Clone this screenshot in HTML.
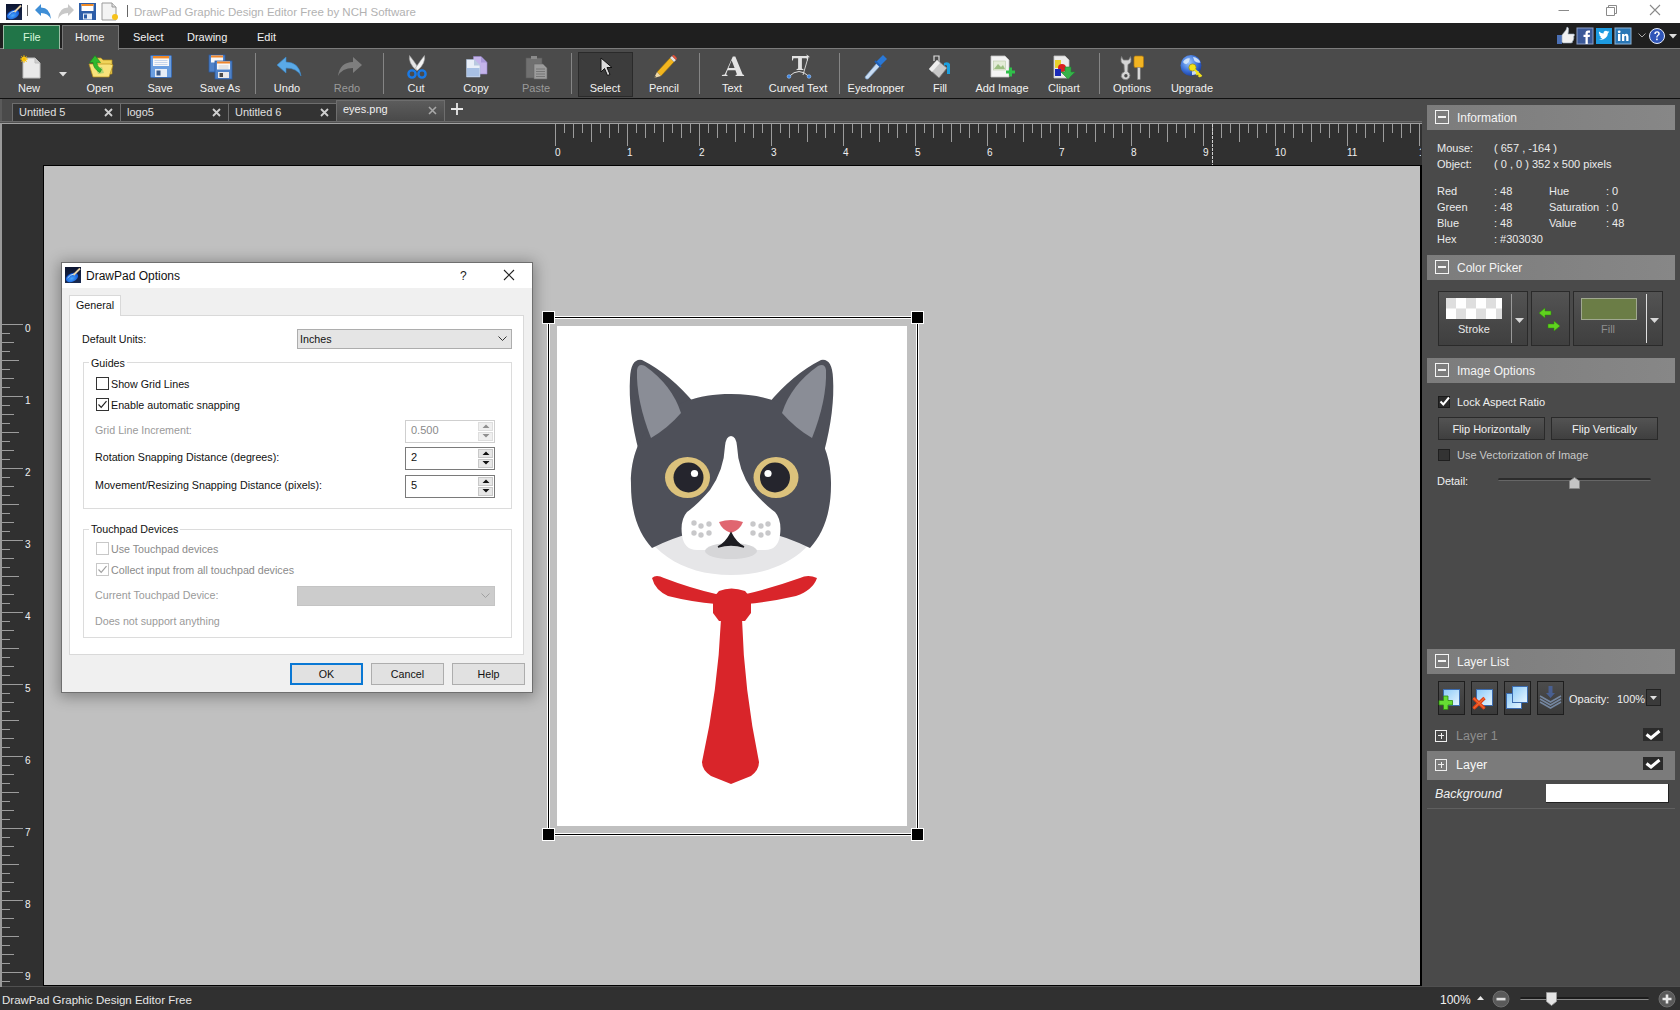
<!DOCTYPE html>
<html><head><meta charset="utf-8">
<style>
*{box-sizing:border-box;margin:0;padding:0}
html,body{width:1680px;height:1010px;overflow:hidden;background:#4a4a4a;font-family:"Liberation Sans",sans-serif;font-size:11px;position:relative}
.a{position:absolute}
.t{position:absolute;white-space:nowrap;line-height:1}
svg{position:absolute;overflow:visible}
#title{left:0;top:0;width:1680px;height:23px;background:#fff}
#menubar{left:0;top:23px;width:1680px;height:26px;background:#1f1f1f}
#menuline{left:0;top:48px;width:1680px;height:1px;background:#7c7c7c}
#toolbar{left:0;top:49px;width:1680px;height:49px;background:#4b4b4b}
#tbline{left:0;top:98px;width:1680px;height:1px;background:#101010}
#tabstrip{left:0;top:99px;width:1422px;height:24px;background:#4a4a4a}
#rulerarea{left:0;top:123px;width:1422px;height:863px;background:#303030}
#canvas{left:43px;top:165px;width:1379px;height:821px;background:#c0c0c0;border:1px solid #000;border-right:2px solid #000;overflow:hidden}
#panel{left:1422px;top:99px;width:258px;height:887px;background:#4a4a4a}
#status{left:0;top:986px;width:1680px;height:24px;background:#303030;border-top:1px solid #505050}
.lbl{position:absolute;top:83px;color:#f2f2f2;font-size:11px;white-space:nowrap;line-height:11px;text-align:center;width:100px;margin-left:-50px}
.lbl.dis{color:#9a9a9a}
.sep{position:absolute;top:53px;width:1px;height:41px;background:#858585}
.mi{position:absolute;top:32px;color:#f2f2f2;font-size:11px;line-height:11px;white-space:nowrap}
</style></head><body>
<div class="a" id="title"></div>
<div class="a" id="menubar"></div>
<div class="a" id="menuline"></div>
<div class="a" id="toolbar"></div>
<div class="a" id="tbline"></div>
<div class="a" id="tabstrip"></div>
<div class="a" id="rulerarea"></div>
<div class="a" id="canvas"></div>
<div class="a" id="panel"></div>
<div class="a" id="status"></div>
<!-- title bar -->
<svg style="left:6px;top:4px" width="16" height="16" viewBox="0 0 16 16">
<defs><linearGradient id="gbg1" x1="0" y1="0" x2="0" y2="1"><stop offset="0" stop-color="#0b1430"/><stop offset="1" stop-color="#1a2a50"/></linearGradient>
<radialGradient id="gbl1" cx="0.45" cy="0.6" r="0.6"><stop offset="0" stop-color="#4aa8ff"/><stop offset="1" stop-color="#0a4ed0"/></radialGradient></defs>
<rect x="0" y="0" width="16" height="16" fill="url(#gbg1)"/>
<ellipse cx="7" cy="10.5" rx="6.5" ry="4.2" transform="rotate(-25 7 10.5)" fill="url(#gbl1)"/>
<path d="M2.5 11 Q5 7.5 9 7" stroke="#bfe4ff" stroke-width="1" fill="none"/>
<path d="M8.5 8 L15 1.5" stroke="#e6d2a8" stroke-width="1.8"/>
</svg>
<div class="a" style="left:27px;top:5px;width:1px;height:11px;background:#666"></div>
<svg style="left:35px;top:4px" width="17" height="16" viewBox="0 0 17 16">
<path d="M0 6 L6 0 L6 3.5 Q15 3.5 16 15 Q13 9 6 9 L6 12 Z" fill="#3e8ed6"/>
</svg>
<svg style="left:57px;top:4px" width="17" height="16" viewBox="0 0 17 16">
<path d="M17 6 L11 0 L11 3.5 Q2 3.5 1 15 Q4 9 11 9 L11 12 Z" fill="#c8c8c8"/>
</svg>
<svg style="left:79px;top:3px" width="17" height="17" viewBox="0 0 17 17">
<rect x="0" y="0" width="17" height="17" fill="#2d5ea8"/>
<rect x="2.5" y="1" width="12" height="7" fill="#fff"/>
<rect x="2.5" y="1" width="12" height="2" fill="#f08a24"/>
<rect x="4" y="10.5" width="9" height="6" fill="#e6eef8"/>
<rect x="5" y="11.5" width="3" height="4" fill="#2d5ea8"/>
</svg>
<svg style="left:101px;top:3px" width="17" height="17" viewBox="0 0 17 17">
<path d="M1 0 L11 0 L15 4 L15 17 L1 17 Z" fill="#f4f4f4" stroke="#9a9a9a" stroke-width="1"/>
<path d="M11 0 L11 4 L15 4" fill="#ddd" stroke="#9a9a9a"/>
<circle cx="14" cy="14" r="3" fill="#f7c21b"/>
</svg>
<div class="a" style="left:127px;top:5px;width:1px;height:12px;background:#666"></div>
<div class="t" style="left:134px;top:7px;font-size:11.5px;color:#b2b2b2">DrawPad Graphic Design Editor Free by NCH Software</div>
<svg style="left:1558px;top:5px" width="104" height="12" viewBox="0 0 104 12">
<path d="M0.5 5.5 H11" stroke="#8a8a8a" stroke-width="1"/>
<path d="M48.5 2.5 H56.5 V10.5 H48.5 Z M50.5 2.5 V0.5 H58.5 V8.5 H56.5" stroke="#8a8a8a" fill="none" stroke-width="1"/>
<path d="M92 0 L102 10 M102 0 L92 10" stroke="#8a8a8a" stroke-width="1.1"/>
</svg>
<!-- menu bar -->
<div class="a" style="left:3px;top:25px;width:57px;height:24px;background:#217548;border:1px solid #9cbfa6;border-bottom:none"></div>
<div class="t" style="left:23px;top:32px;font-size:11px;color:#d8f5dc">File</div>
<div class="a" style="left:62px;top:25px;width:57px;height:25px;background:#4b4b4b;border:1px solid #777;border-bottom:none"></div>
<div class="mi" style="left:75px">Home</div>
<div class="mi" style="left:133px">Select</div>
<div class="mi" style="left:187px">Drawing</div>
<div class="mi" style="left:257px">Edit</div>
<!-- social icons -->
<svg style="left:1557px;top:27px" width="18" height="17" viewBox="0 0 18 17">
<rect x="0" y="8" width="5" height="9" fill="#4a6fb5"/>
<path d="M5 8 L9 3 L10 0 Q12 0 11.5 4 L11 7 L17 7 Q18 8 17 9 L16.5 10 Q17.5 11 16.5 12 Q17 13.5 15.5 14 Q16 16 14 16 L6 16 L5 15 Z" fill="#f0f0f0" stroke="#9ab" stroke-width="0.6"/>
</svg>
<svg style="left:1577px;top:28px" width="16" height="16" viewBox="0 0 16 16">
<rect x="0" y="0" width="16" height="16" fill="#3b5998"/>
<rect x="0" y="0" width="16" height="16" fill="none" stroke="#8ea0c8" stroke-width="1"/>
<path d="M8.5 16 V9 H6.5 V6.8 H8.5 V5 Q8.5 2.5 11 2.5 H13 V4.7 H11.6 Q10.8 4.7 10.8 5.5 V6.8 H13 L12.7 9 H10.8 V16 Z" fill="#fff"/>
</svg>
<svg style="left:1596px;top:28px" width="16" height="16" viewBox="0 0 16 16">
<rect x="0" y="0" width="16" height="16" fill="#1d9ae0"/>
<path d="M3 11.5 Q7 12.5 9.5 10 Q12 7.5 12 5 L13.5 3.8 L12.2 4 L13 2.8 L11.5 3.4 Q10 2 8.3 3.3 Q7.3 4.3 7.6 5.6 Q5 5.5 3 3.5 Q2.3 5.5 4 6.8 L3.2 6.6 Q3.4 8.2 5 8.8 L4.2 8.9 Q4.8 10.2 6.4 10.4 Q5 11.5 3 11.5 Z" fill="#fff"/>
</svg>
<svg style="left:1615px;top:28px" width="16" height="16" viewBox="0 0 16 16">
<rect x="0" y="0" width="16" height="16" fill="#2a77b5"/>
<rect x="0" y="0" width="16" height="16" fill="none" stroke="#8db3d6" stroke-width="1"/>
<rect x="3" y="6" width="2.4" height="7" fill="#fff"/>
<circle cx="4.2" cy="3.8" r="1.4" fill="#fff"/>
<path d="M7 6 H9.2 V7 Q10 5.8 11.5 5.8 Q13.5 5.8 13.5 8.5 V13 H11.2 V9 Q11.2 7.8 10.2 7.8 Q9.3 7.8 9.3 9 V13 H7 Z" fill="#fff"/>
</svg>
<svg style="left:1638px;top:33px" width="8" height="5" viewBox="0 0 8 5"><path d="M0.5 0.5 L4 4 L7.5 0.5" stroke="#aaa" fill="none" stroke-width="1"/></svg>
<svg style="left:1649px;top:28px" width="16" height="16" viewBox="0 0 16 16">
<circle cx="8" cy="8" r="7.5" fill="#2f55b8" stroke="#e8eefc" stroke-width="1"/>
<path d="M5.3 6 Q5.3 3.2 8.1 3.2 Q10.8 3.2 10.8 5.7 Q10.8 7.2 9 8.1 Q8.5 8.4 8.5 9.6 H7.2 Q7.2 7.8 8.2 7.2 Q9.3 6.5 9.3 5.7 Q9.3 4.6 8.1 4.6 Q6.8 4.6 6.8 6 Z" fill="#fff"/>
<rect x="7.1" y="10.6" width="1.6" height="1.6" fill="#fff"/>
</svg>
<svg style="left:1669px;top:34px" width="8" height="5" viewBox="0 0 8 5"><path d="M0 0 L8 0 L4 4.5 Z" fill="#ddd"/></svg>
<!-- toolbar -->
<!-- New -->
<svg style="left:20px;top:55px" width="22" height="24" viewBox="0 0 22 24">
<path d="M3 3 H15 L20 8 V23 H3 Z" fill="#e9e9e9" stroke="#bdbdbd" stroke-width="1"/>
<path d="M15 3 V8 H20" fill="#cfcfcf" stroke="#bdbdbd" stroke-width="1"/>
<circle cx="4" cy="4" r="2.6" fill="#ffd21f"/>
<path d="M4 0 V8 M0 4 H8 M1.2 1.2 L6.8 6.8 M6.8 1.2 L1.2 6.8" stroke="#f5b800" stroke-width="0.8"/>
</svg>
<svg style="left:59px;top:72px" width="9" height="5" viewBox="0 0 9 5"><path d="M0 0 H8 L4 4.5 Z" fill="#e0e0e0"/></svg>
<div class="lbl" style="left:29px">New</div>
<!-- Open -->
<svg style="left:88px;top:55px" width="26" height="24" viewBox="0 0 26 24">
<path d="M6 3 H13 L15 5 H24 V19 H6 Z" fill="#f0d45a" stroke="#b8901a" stroke-width="0.7"/>
<path d="M1 9 H22 L25 10 L21 22 H5 Z" fill="#f8e27a" stroke="#b8901a" stroke-width="0.7"/>
<path d="M8 13 L14 12 L16 18 L10 19 Z" fill="#a8d070" opacity="0.85"/>
<path d="M7 0.5 L1.5 7.5 H5 Q5.5 14 12 17.5 L13.5 14.5 Q9 12 8.8 7.5 H12.5 Z" fill="#2eb82e" stroke="#168a16" stroke-width="0.6"/>
</svg>
<div class="lbl" style="left:100px">Open</div>
<!-- Save -->
<svg style="left:150px;top:55px" width="22" height="23" viewBox="0 0 22 23">
<rect x="0.5" y="0.5" width="21" height="22" rx="1" fill="#6a9ee0" stroke="#3a6ab0" stroke-width="1"/>
<rect x="3" y="1" width="16" height="10" fill="#f8f8f8"/>
<rect x="3" y="1" width="16" height="2.4" fill="#f08a2a"/>
<path d="M4.5 5.5 H17.5 M4.5 7.5 H17.5 M4.5 9.5 H17.5" stroke="#b8cce8" stroke-width="0.8"/>
<rect x="5" y="14" width="12" height="8" fill="#e8eef6"/>
<rect x="6.5" y="15.5" width="4" height="5" fill="#3a5a8a"/>
</svg>
<div class="lbl" style="left:160px">Save</div>
<!-- Save As -->
<svg style="left:208px;top:54px" width="26" height="26" viewBox="0 0 26 26">
<rect x="1" y="1" width="16" height="17" fill="#4f82c8" stroke="#2b5aa0" stroke-width="0.8"/>
<rect x="3" y="1.5" width="12" height="7" fill="#f8f8f8"/>
<rect x="3" y="1.5" width="12" height="2" fill="#f0862a"/>
<rect x="7" y="7" width="17" height="18" fill="#4f82c8" stroke="#2b5aa0" stroke-width="0.8"/>
<rect x="9" y="7.5" width="13" height="8" fill="#f8f8f8"/>
<rect x="9" y="7.5" width="13" height="2" fill="#f0862a"/>
<path d="M10.5 12 H20.5 M10.5 14 H20.5" stroke="#c8c8c8" stroke-width="0.8"/>
<rect x="10" y="18" width="11" height="6" fill="#eaeaea"/>
<rect x="11.5" y="19" width="3.5" height="4" fill="#4a4a4a"/>
</svg>
<div class="lbl" style="left:220px">Save As</div>
<div class="sep" style="left:255px"></div>
<!-- Undo -->
<svg style="left:277px;top:57px" width="25" height="20" viewBox="0 0 25 20">
<path d="M0 8 L9 0 L9 5 Q22 5 24 19 Q20 11 9 11 L9 16 Z" fill="#5aa9e6" stroke="#3a86c8" stroke-width="0.6"/>
</svg>
<div class="lbl" style="left:287px">Undo</div>
<!-- Redo -->
<svg style="left:337px;top:57px" width="25" height="20" viewBox="0 0 25 20">
<path d="M25 8 L16 0 L16 5 Q3 5 1 19 Q5 11 16 11 L16 16 Z" fill="#7e7e7e"/>
</svg>
<div class="lbl dis" style="left:347px">Redo</div>
<div class="sep" style="left:383px"></div>
<!-- Cut -->
<svg style="left:405px;top:55px" width="24" height="25" viewBox="0 0 24 25">
<path d="M4.5 0.5 Q3 8 11.5 15.5 L13.5 13 Q9 6 4.5 0.5 Z" fill="#e6e6e6" stroke="#a0a0a0" stroke-width="0.6"/>
<path d="M19.5 0.5 Q21 8 12.5 15.5 L10.5 13 Q15 6 19.5 0.5 Z" fill="#f4f4f4" stroke="#a0a0a0" stroke-width="0.6"/>
<circle cx="7" cy="19" r="3.6" fill="none" stroke="#1a7ae6" stroke-width="2.4"/>
<circle cx="17" cy="19" r="3.6" fill="none" stroke="#1a7ae6" stroke-width="2.4"/>
</svg>
<div class="lbl" style="left:416px">Cut</div>
<!-- Copy -->
<svg style="left:465px;top:56px" width="24" height="24" viewBox="0 0 24 24">
<path d="M8.5 0.5 H16 L22 6.5 V18 H8.5 Z" fill="#c4b4ea" stroke="#9a88cc" stroke-width="0.6"/>
<path d="M16 0.5 V6.5 H22" fill="#a898d8"/>
<path d="M1.5 3.5 H9 L15 9.5 V21 H1.5 Z" fill="#e8eef8" stroke="#a8bcd8" stroke-width="0.6"/>
<path d="M9 3.5 V9.5 H15" fill="#b8c8e0"/>
<rect x="2" y="12" width="12.5" height="8.5" fill="#a8c0e4"/>
</svg>
<div class="lbl" style="left:476px">Copy</div>
<!-- Paste -->
<svg style="left:525px;top:56px" width="24" height="24" viewBox="0 0 24 24">
<rect x="1" y="2" width="16" height="20" fill="#707070" stroke="#5a5a5a" stroke-width="0.6"/>
<rect x="6" y="0" width="6" height="3" fill="#8a8a8a"/>
<path d="M9 8 H18 L22 12 V23 H9 Z" fill="#9c9c9c" stroke="#6a6a6a" stroke-width="0.6"/>
<path d="M11 13 H20 M11 15.5 H20 M11 18 H20 M11 20.5 H20" stroke="#6c6c6c" stroke-width="0.8"/>
</svg>
<div class="lbl dis" style="left:536px">Paste</div>
<div class="sep" style="left:571px"></div>
<!-- Select (active) -->
<div class="a" style="left:578px;top:52px;width:55px;height:45px;background:#3c3c3c;border:1px solid #2a2a2a"></div>
<svg style="left:600px;top:57px" width="13" height="20" viewBox="0 0 13 20">
<path d="M1 1 L1 15 L4.5 11.5 L7.5 18.5 L10 17.5 L7 10.5 L12 10.5 Z" fill="#dcdcdc" stroke="#111" stroke-width="1"/>
</svg>
<div class="lbl" style="left:605px">Select</div>
<!-- Pencil -->
<svg style="left:653px;top:55px" width="24" height="24" viewBox="0 0 24 24">
<path d="M4 17 L17 3 L21 7 L8 21 Z" fill="#f2b51e" stroke="#8a6a10" stroke-width="0.6"/>
<path d="M17 3 L19 1 L23 5 L21 7 Z" fill="#e4e4e4"/>
<path d="M19.3 0.7 Q20.5 -0.5 21.8 0.8 L23.2 2.2 Q24.5 3.5 23.3 4.7 L23 5 L19 1 Z" fill="#e0523a"/>
<path d="M4 17 L8 21 L1 23 Z" fill="#f0d9a8"/>
<path d="M2 21 L3 22 L1 23 Z" fill="#222"/>
</svg>
<div class="lbl" style="left:664px">Pencil</div>
<div class="sep" style="left:699px"></div>
<!-- Text -->
<svg style="left:721px;top:56px" width="24" height="21" viewBox="0 0 26 22" preserveAspectRatio="none"><path d="M1 21 H7 V20 L5.5 19.5 L7.2 15 H15.6 L17.3 19.5 L15.8 20 V21 H25 V20 L23.5 19.5 L15.5 0.5 H12.8 L4 19.5 L1 20 Z M8.2 12.6 L11.5 4.5 L14.7 12.6 Z" fill="#e4e4e4" fill-rule="evenodd"/></svg>
<div class="lbl" style="left:732px">Text</div>
<!-- Curved text -->
<svg style="left:786px;top:54px" width="26" height="26" viewBox="0 0 26 26">
<path d="M6 2 H22 V6.5 H21.2 L20.5 4.2 H15.9 V14.5 L17.6 15.4 V16 H10.4 V15.4 L12.1 14.5 V4.2 H7.5 L6.8 6.5 H6 Z" fill="#e2e2e2"/>
<path d="M3 22.5 Q13 12.5 23 22.5" stroke="#e0e0e0" fill="none" stroke-width="1"/>
<path d="M22.5 2 L17 21" stroke="#e0e0e0" stroke-width="0.9"/>
<path d="M20.5 1 L23.5 3" stroke="#e0e0e0" stroke-width="0.9"/>
<circle cx="3" cy="22.5" r="1.8" fill="#3a86e6" stroke="#a8ccff" stroke-width="0.6"/>
<circle cx="23" cy="22.5" r="1.8" fill="#3a86e6" stroke="#a8ccff" stroke-width="0.6"/>
</svg>
<div class="lbl" style="left:798px">Curved Text</div>
<div class="sep" style="left:839px"></div>
<!-- Eyedropper -->
<svg style="left:864px;top:54px" width="24" height="26" viewBox="0 0 24 26">
<path d="M2 25 L1 23 L13 9 L16 12 L4 25 Z" fill="#c9dcf2" stroke="#7aa0cc" stroke-width="0.7"/>
<path d="M12 8 L19 1 L23 5 L16 12 Z" fill="#2a78d6"/>
<path d="M11 7 L17 13" stroke="#1d5fb8" stroke-width="2"/>
</svg>
<div class="lbl" style="left:876px">Eyedropper</div>
<!-- Fill -->
<svg style="left:927px;top:54px" width="26" height="26" viewBox="0 0 26 26">
<path d="M7 7 V2 H12 V8" stroke="#ddd" fill="none" stroke-width="1.2"/>
<path d="M2 15 L10 6 L20 14 L12 24 Z" fill="#c8c8c8" stroke="#7a7a7a" stroke-width="0.8"/>
<path d="M2 15 L10 6 L13 9 L5 18 Z" fill="#eeeeee"/>
<path d="M17 9 Q21 7 23 10 V20 H20 V12 Q19 10 17 12 Z" fill="#1aa0e0"/>
</svg>
<div class="lbl" style="left:940px">Fill</div>
<!-- Add Image -->
<svg style="left:990px;top:55px" width="26" height="26" viewBox="0 0 26 26">
<path d="M1 1 H15 L19 5 V22 H1 Z" fill="#f4f4f4" stroke="#c4c4c4" stroke-width="0.8"/>
<rect x="3.5" y="6" width="12" height="9" fill="#e4ecd8" stroke="#b8c8a8" stroke-width="0.6"/>
<path d="M4 14 L8 9 L11 12 L13 10 L15 14 Z" fill="#9cbf82"/>
<path d="M16 17 H25 M20.5 12.5 V21.5" stroke="#2fbf4a" stroke-width="3"/>
</svg>
<div class="lbl" style="left:1002px">Add Image</div>
<!-- Clipart -->
<svg style="left:1052px;top:55px" width="26" height="26" viewBox="0 0 26 26">
<path d="M2 1 H13 L17 5 V23 H2 Z" fill="#ececec" stroke="#c4c4c4" stroke-width="0.8"/>
<path d="M3 5 L9 5 L9 13 L3 13 Z" fill="#e8d22a"/>
<circle cx="10" cy="13" r="4" fill="#d82020"/>
<rect x="3" y="14" width="6" height="7" fill="#1a2ab8"/>
<path d="M13 12 H19 V17 H23 L16 24 L9 17 H13 Z" fill="#36b24a" stroke="#1e8a30" stroke-width="0.6"/>
</svg>
<div class="lbl" style="left:1064px">Clipart</div>
<div class="sep" style="left:1099px"></div>
<!-- Options -->
<svg style="left:1120px;top:55px" width="26" height="26" viewBox="0 0 26 26">
<path d="M1.5 1.5 Q-0.5 8 4 9.5 L4.3 16.8 Q0.8 18.2 1.2 21.5 Q2.5 25 6.2 24.8 Q10 24 10 20.5 Q9.8 17.8 7.8 16.8 L8 9.5 Q12.5 8 10.5 1.5 L8.6 5 H3.4 Z" fill="#d4d4d4" stroke="#7a7a7a" stroke-width="0.8"/>
<circle cx="5.9" cy="20.8" r="1.7" fill="#4b4b4b"/>
<rect x="14" y="1" width="9.5" height="11.5" rx="1.5" fill="#f2b422" stroke="#b07a10" stroke-width="0.7"/>
<rect x="17.6" y="12.5" width="2.6" height="12" fill="#d8d8d8" stroke="#888" stroke-width="0.5"/>
</svg>
<div class="lbl" style="left:1132px">Options</div>
<!-- Upgrade -->
<svg style="left:1180px;top:55px" width="24" height="24" viewBox="0 0 24 24">
<defs><radialGradient id="glb" cx="0.4" cy="0.35" r="0.7"><stop offset="0" stop-color="#9cc8ff"/><stop offset="0.6" stop-color="#3a70d8"/><stop offset="1" stop-color="#1a3a9a"/></radialGradient></defs>
<circle cx="11" cy="10.5" r="10.5" fill="url(#glb)"/>
<path d="M3 7 Q6 2.5 10 3.5 Q9.5 7 6.5 9 Q4.5 9.5 3 7 Z M13 2 Q18.5 2.5 20.5 7.5 Q17 8.5 14.5 6 Z M12 16 Q16 15 19 16.5 Q16 20 12 20 Z" fill="#d8e8fa" opacity="0.9"/>
<circle cx="12.5" cy="12.5" r="3.6" fill="#f2e21a" stroke="#9a8a10" stroke-width="0.7"/>
<path d="M14.8 14.8 L21.5 21.5 M18 18 L16.2 19.8 M20.2 20.2 L18.6 21.8" stroke="#f2e21a" stroke-width="2.2"/>
</svg>
<div class="lbl" style="left:1192px">Upgrade</div>
<!-- doc tabs -->
<div class="a" style="left:0;top:99px;width:2px;height:24px;background:#5a5a5a"></div>
<div class="a" style="left:12px;top:103px;width:109px;height:19px;background:#333;border:1px solid #6e6e6e;border-bottom:none"></div>
<div class="a" style="left:120px;top:103px;width:109px;height:19px;background:#333;border:1px solid #6e6e6e;border-bottom:none"></div>
<div class="a" style="left:228px;top:103px;width:109px;height:19px;background:#333;border:1px solid #6e6e6e;border-bottom:none"></div>
<div class="a" style="left:336px;top:100px;width:109px;height:22px;background:linear-gradient(#5c5c5c,#484848);border:1px solid #6e6e6e;border-bottom:none"></div>
<div class="t" style="left:19px;top:107px;color:#e0e0e0;font-size:11px">Untitled 5</div>
<div class="t" style="left:127px;top:107px;color:#e0e0e0;font-size:11px">logo5</div>
<div class="t" style="left:235px;top:107px;color:#e0e0e0;font-size:11px">Untitled 6</div>
<div class="t" style="left:343px;top:104px;color:#f0f0f0;font-size:11px">eyes.png</div>
<svg style="left:104px;top:108px" width="9" height="9" viewBox="0 0 9 9"><path d="M1 1 L8 8 M8 1 L1 8" stroke="#cfcfcf" stroke-width="1.8"/></svg>
<svg style="left:212px;top:108px" width="9" height="9" viewBox="0 0 9 9"><path d="M1 1 L8 8 M8 1 L1 8" stroke="#cfcfcf" stroke-width="1.8"/></svg>
<svg style="left:320px;top:108px" width="9" height="9" viewBox="0 0 9 9"><path d="M1 1 L8 8 M8 1 L1 8" stroke="#cfcfcf" stroke-width="1.8"/></svg>
<svg style="left:428px;top:106px" width="9" height="9" viewBox="0 0 9 9"><path d="M1 1 L8 8 M8 1 L1 8" stroke="#a8a8a8" stroke-width="1.6"/></svg>
<svg style="left:451px;top:103px" width="12" height="12" viewBox="0 0 12 12"><path d="M6 0 V12 M0 6 H12" stroke="#e8e8e8" stroke-width="1.8"/></svg>
<div class="a" style="left:0;top:121px;width:1422px;height:1px;background:#6a6a6a"></div>
<div class="a" style="left:0;top:122px;width:1422px;height:1px;background:#505050"></div>
<div class="a" style="left:0;top:123px;width:1422px;height:1px;background:#a2a2a2"></div>
<!-- rulers -->
<div class="a" style="left:0px;top:123px;width:2px;height:864px;background:#9a9a9a"></div>
<div class="a" style="left:0;top:0;width:1421px;height:1010px;overflow:hidden"><svg style="left:0;top:0" width="1680" height="1010" viewBox="0 0 1680 1010"><path d="M555.5 124V146 M564.5 124V133 M573.5 124V138 M582.5 124V133 M591.5 124V142 M600.5 124V133 M609.5 124V138 M618.5 124V133 M627.5 124V146 M636.5 124V133 M645.5 124V138 M654.5 124V133 M663.5 124V142 M672.5 124V133 M681.5 124V138 M690.5 124V133 M699.5 124V146 M708.5 124V133 M717.5 124V138 M726.5 124V133 M735.5 124V142 M744.5 124V133 M753.5 124V138 M762.5 124V133 M771.5 124V146 M780.5 124V133 M789.5 124V138 M798.5 124V133 M807.5 124V142 M816.5 124V133 M825.5 124V138 M834.5 124V133 M843.5 124V146 M852.5 124V133 M861.5 124V138 M870.5 124V133 M879.5 124V142 M888.5 124V133 M897.5 124V138 M906.5 124V133 M915.5 124V146 M924.5 124V133 M933.5 124V138 M942.5 124V133 M951.5 124V142 M960.5 124V133 M969.5 124V138 M978.5 124V133 M987.5 124V146 M996.5 124V133 M1005.5 124V138 M1014.5 124V133 M1023.5 124V142 M1032.5 124V133 M1041.5 124V138 M1050.5 124V133 M1059.5 124V146 M1068.5 124V133 M1077.5 124V138 M1086.5 124V133 M1095.5 124V142 M1104.5 124V133 M1113.5 124V138 M1122.5 124V133 M1131.5 124V146 M1140.5 124V133 M1149.5 124V138 M1158.5 124V133 M1167.5 124V142 M1176.5 124V133 M1185.5 124V138 M1194.5 124V133 M1203.5 124V146 M1212.5 124V133 M1221.5 124V138 M1230.5 124V133 M1239.5 124V142 M1248.5 124V133 M1257.5 124V138 M1266.5 124V133 M1275.5 124V146 M1284.5 124V133 M1293.5 124V138 M1302.5 124V133 M1311.5 124V142 M1320.5 124V133 M1329.5 124V138 M1338.5 124V133 M1347.5 124V146 M1356.5 124V133 M1365.5 124V138 M1374.5 124V133 M1383.5 124V142 M1392.5 124V133 M1401.5 124V138 M1410.5 124V133 M1419.5 124V146" stroke="#9c9c9c" stroke-width="1" fill="none"/><path d="M2 324.5H23 M2 333.5H10 M2 342.5H14 M2 351.5H10 M2 360.5H19 M2 369.5H10 M2 378.5H14 M2 387.5H10 M2 396.5H23 M2 405.5H10 M2 414.5H14 M2 423.5H10 M2 432.5H19 M2 441.5H10 M2 450.5H14 M2 459.5H10 M2 468.5H23 M2 477.5H10 M2 486.5H14 M2 495.5H10 M2 504.5H19 M2 513.5H10 M2 522.5H14 M2 531.5H10 M2 540.5H23 M2 549.5H10 M2 558.5H14 M2 567.5H10 M2 576.5H19 M2 585.5H10 M2 594.5H14 M2 603.5H10 M2 612.5H23 M2 621.5H10 M2 630.5H14 M2 639.5H10 M2 648.5H19 M2 657.5H10 M2 666.5H14 M2 675.5H10 M2 684.5H23 M2 693.5H10 M2 702.5H14 M2 711.5H10 M2 720.5H19 M2 729.5H10 M2 738.5H14 M2 747.5H10 M2 756.5H23 M2 765.5H10 M2 774.5H14 M2 783.5H10 M2 792.5H19 M2 801.5H10 M2 810.5H14 M2 819.5H10 M2 828.5H23 M2 837.5H10 M2 846.5H14 M2 855.5H10 M2 864.5H19 M2 873.5H10 M2 882.5H14 M2 891.5H10 M2 900.5H23 M2 909.5H10 M2 918.5H14 M2 927.5H10 M2 936.5H19 M2 945.5H10 M2 954.5H14 M2 963.5H10 M2 972.5H23 M2 981.5H10" stroke="#9c9c9c" stroke-width="1" fill="none"/><path d="M1212.5 124V165" stroke="#cfcfcf" stroke-width="1" stroke-dasharray="3 1"/><g font-family="Liberation Sans" font-size="10" fill="#f0f0f0"><text x="555" y="156">0</text><text x="627" y="156">1</text><text x="699" y="156">2</text><text x="771" y="156">3</text><text x="843" y="156">4</text><text x="915" y="156">5</text><text x="987" y="156">6</text><text x="1059" y="156">7</text><text x="1131" y="156">8</text><text x="1203" y="156">9</text><text x="1275" y="156">10</text><text x="1347" y="156">11</text><text x="1419" y="156">12</text><text x="25" y="332">0</text><text x="25" y="404">1</text><text x="25" y="476">2</text><text x="25" y="548">3</text><text x="25" y="620">4</text><text x="25" y="692">5</text><text x="25" y="764">6</text><text x="25" y="836">7</text><text x="25" y="908">8</text><text x="25" y="980">9</text></g></svg></div>
<!-- canvas image -->
<div class="a" style="left:557px;top:326px;width:350px;height:500px;background:#fff"></div>
<svg style="left:0;top:0" width="1680" height="1010" viewBox="0 0 1680 1010">
<!-- chin -->
<path d="M731 394 C800 394 832 435 831 485 C830 540 790 575 731 575 C672 575 632 540 631 485 C630 435 662 394 731 394 Z" fill="#e6e6e8"/>
<!-- ears -->
<path d="M639 452 Q628 410 630 378 Q631 358 642 360 Q670 374 695 404 Z" fill="#4e5059"/>
<path d="M824 452 Q835 410 833 378 Q832 358 821 360 Q793 374 768 404 Z" fill="#4e5059"/>
<!-- head -->
<path d="M731 394 C800 394 832 435 831 485 C831 515 822 535 810 548 Q770 528 731 528 Q692 528 652 548 C640 535 631 515 631 485 C630 435 662 394 731 394 Z" fill="#4e5059"/>
<path d="M651 438 Q636 400 637 370 Q638 363 645 366 Q672 385 681 413 Q668 428 651 438 Z" fill="#8a8d96"/>
<path d="M812 438 Q827 400 826 370 Q825 363 818 366 Q791 385 782 413 Q795 428 812 438 Z" fill="#8a8d96"/>
<!-- blaze & muzzle -->
<path d="M731 436 Q736 436 737 446 Q738 470 752 490 Q765 505 775 512 Q782 520 780 535 Q778 550 765 550 L697 550 Q684 550 682 535 Q680 520 687 512 Q697 505 710 490 Q724 470 725 446 Q726 436 731 436 Z" fill="#fff"/>
<ellipse cx="731" cy="551" rx="26" ry="8" fill="#d6d6d8"/>
<!-- eyes -->
<ellipse cx="687.5" cy="477.5" rx="22.5" ry="20.5" fill="#dcc27c"/>
<circle cx="688.5" cy="477.5" r="15" fill="#25252d"/>
<circle cx="694.5" cy="473.5" r="3.6" fill="#fff"/>
<ellipse cx="776" cy="477.5" rx="22.5" ry="20.5" fill="#dcc27c"/>
<circle cx="775" cy="477.5" r="15" fill="#25252d"/>
<circle cx="768" cy="473.5" r="3.6" fill="#fff"/>
<!-- nose & mouth -->
<path d="M719 522 Q731 518 743 522 Q740 530 731 533 Q722 530 719 522 Z" fill="#e06670"/>
<path d="M731 533 Q726 543 718 547 Q731 543 744 547 Q736 543 731 533 Z" fill="#1d1d22" stroke="#1d1d22" stroke-width="1.5"/>
<g fill="#c8c8ca">
<circle cx="694" cy="523" r="2.7"/><circle cx="701" cy="526" r="2.7"/><circle cx="709" cy="524" r="2.7"/>
<circle cx="694" cy="533" r="2.7"/><circle cx="701" cy="535" r="2.7"/><circle cx="709" cy="533" r="2.7"/>
<circle cx="768" cy="524" r="2.7"/><circle cx="761" cy="526" r="2.7"/><circle cx="753" cy="524" r="2.7"/>
<circle cx="768" cy="533" r="2.7"/><circle cx="761" cy="535" r="2.7"/><circle cx="753" cy="533" r="2.7"/>
</g>
<!-- tie -->
<path d="M652 578 Q656 574 664 578 Q690 588 716 594 L746 594 Q772 588 800 578 Q808 574 817 578 Q813 590 796 596 Q770 602 746 604 L716 604 Q692 602 668 596 Q655 590 652 578 Z" fill="#d9252a"/>
<path d="M719 591 Q731 586 745 591 L751 598 V613 L745 621 H719 L713 613 V598 Z" fill="#d9252a"/>
<path d="M721 619 H742 Q744 690 759 762 Q759 770 751 776 L731 784 L711 776 Q702 770 702 762 Q718 690 721 619 Z" fill="#d9252a"/>
<!-- selection frame -->
<path d="M548.5 317.5 H917.5 V834.5 H548.5 Z" fill="none" stroke="#fff" stroke-width="3"/>
<path d="M548.5 317.5 H917.5 V834.5 H548.5 Z" fill="none" stroke="#000" stroke-width="1"/>
<g fill="#000" stroke="#fff" stroke-width="1">
<rect x="542.5" y="311.5" width="12" height="12"/>
<rect x="911.5" y="311.5" width="12" height="12"/>
<rect x="542.5" y="828.5" width="12" height="12"/>
<rect x="911.5" y="828.5" width="12" height="12"/>
</g>
</svg>
<!-- dialog --><div style="font-size:10.7px">
<div class="a" style="left:61px;top:262px;width:472px;height:431px;background:#f0f0f0;border:1px solid #6f6f6f;box-shadow:0 2px 14px 2px rgba(0,0,0,0.32)"></div>
<div class="a" style="left:62px;top:263px;width:470px;height:25px;background:#fff"></div>
<svg style="left:65px;top:267px" width="16" height="16" viewBox="0 0 16 16">
<defs><linearGradient id="gbg2" x1="0" y1="0" x2="0" y2="1"><stop offset="0" stop-color="#0b1430"/><stop offset="1" stop-color="#1a2a50"/></linearGradient>
<radialGradient id="gbl2" cx="0.45" cy="0.6" r="0.6"><stop offset="0" stop-color="#4aa8ff"/><stop offset="1" stop-color="#0a4ed0"/></radialGradient></defs>
<rect x="0" y="0" width="16" height="16" fill="url(#gbg2)"/>
<ellipse cx="7" cy="10.5" rx="6.5" ry="4.2" transform="rotate(-25 7 10.5)" fill="url(#gbl2)"/>
<path d="M2.5 11 Q5 7.5 9 7" stroke="#bfe4ff" stroke-width="1" fill="none"/>
<path d="M8.5 8 L15 1.5" stroke="#e6d2a8" stroke-width="1.8"/>
</svg>
<div class="t" style="left:86px;top:270px;font-size:12px;color:#111">DrawPad Options</div>
<div class="t" style="left:460px;top:270px;font-size:12px;color:#222">?</div>
<svg style="left:504px;top:270px" width="10" height="10" viewBox="0 0 10 10"><path d="M0 0 L10 10 M10 0 L0 10" stroke="#222" stroke-width="1.1"/></svg>
<!-- tab page -->
<div class="a" style="left:69px;top:315px;width:455px;height:340px;background:#fff;border:1px solid #d9d9d9"></div>
<div class="a" style="left:69px;top:295px;width:52px;height:21px;background:#fff;border:1px solid #d9d9d9;border-bottom:none"></div>
<div class="t" style="left:76px;top:300px;color:#111">General</div>
<div class="t" style="left:82px;top:334px;color:#111">Default Units:</div>
<div class="a" style="left:297px;top:329px;width:215px;height:20px;background:#e5e5e5;border:1px solid #adadad"></div>
<div class="t" style="left:300px;top:334px;color:#111">Inches</div>
<svg style="left:498px;top:336px" width="9" height="6" viewBox="0 0 9 6"><path d="M0.5 0.5 L4.5 4.5 L8.5 0.5" stroke="#333" fill="none" stroke-width="1"/></svg>
<!-- guides group -->
<div class="a" style="left:83px;top:362px;width:429px;height:147px;border:1px solid #dcdcdc"></div>
<div class="t" style="left:89px;top:358px;color:#111;background:#fff;padding:0 2px">Guides</div>
<div class="a" style="left:96px;top:377px;width:13px;height:13px;border:1px solid #333;background:#fff"></div>
<div class="t" style="left:111px;top:379px;color:#111">Show Grid Lines</div>
<div class="a" style="left:96px;top:398px;width:13px;height:13px;border:1px solid #333;background:#fff"></div>
<svg style="left:97px;top:399px" width="11" height="11" viewBox="0 0 11 11"><path d="M1.5 5.5 L4.2 8.3 L9.5 2.2" stroke="#222" fill="none" stroke-width="1.2"/></svg>
<div class="t" style="left:111px;top:400px;color:#111">Enable automatic snapping</div>
<div class="t" style="left:95px;top:425px;color:#9a9a9a">Grid Line Increment:</div>
<div class="a" style="left:405px;top:420px;width:90px;height:23px;border:1px solid #cfcfcf;background:#fff"></div>
<div class="a" style="left:478px;top:422px;width:15px;height:9px;border:1px solid #dedede;background:#efefef"></div>
<div class="a" style="left:478px;top:432px;width:15px;height:9px;border:1px solid #dedede;background:#efefef"></div>
<div class="t" style="left:411px;top:425px;color:#8a8a8a;font-size:11px">0.500</div>
<svg style="left:482px;top:424px" width="8" height="14" viewBox="0 0 8 14"><path d="M4 0.5 L7.5 4 H0.5 Z M0.5 10 H7.5 L4 13.5 Z" fill="#909090"/></svg>
<div class="t" style="left:95px;top:452px;color:#111">Rotation Snapping Distance (degrees):</div>
<div class="a" style="left:405px;top:447px;width:90px;height:23px;border:1px solid #7a7a7a;background:#fff"></div>
<div class="a" style="left:478px;top:449px;width:15px;height:9px;border:1px solid #c8c8c8;background:#e6e6e6"></div>
<div class="a" style="left:478px;top:459px;width:15px;height:9px;border:1px solid #c8c8c8;background:#e6e6e6"></div>
<div class="t" style="left:411px;top:452px;color:#111;font-size:11px">2</div>
<svg style="left:482px;top:451px" width="8" height="14" viewBox="0 0 8 14"><path d="M4 0.5 L7.5 4 H0.5 Z M0.5 10 H7.5 L4 13.5 Z" fill="#111"/></svg>
<div class="t" style="left:95px;top:480px;color:#111">Movement/Resizing Snapping Distance (pixels):</div>
<div class="a" style="left:405px;top:475px;width:90px;height:23px;border:1px solid #7a7a7a;background:#fff"></div>
<div class="a" style="left:478px;top:477px;width:15px;height:9px;border:1px solid #c8c8c8;background:#e6e6e6"></div>
<div class="a" style="left:478px;top:487px;width:15px;height:9px;border:1px solid #c8c8c8;background:#e6e6e6"></div>
<div class="t" style="left:411px;top:480px;color:#111;font-size:11px">5</div>
<svg style="left:482px;top:479px" width="8" height="14" viewBox="0 0 8 14"><path d="M4 0.5 L7.5 4 H0.5 Z M0.5 10 H7.5 L4 13.5 Z" fill="#111"/></svg>
<!-- touchpad group -->
<div class="a" style="left:83px;top:529px;width:429px;height:109px;border:1px solid #dcdcdc"></div>
<div class="t" style="left:89px;top:524px;color:#111;background:#fff;padding:0 2px">Touchpad Devices</div>
<div class="a" style="left:96px;top:542px;width:13px;height:13px;border:1px solid #c8c8c8;background:#fff"></div>
<div class="t" style="left:111px;top:544px;color:#8a8a8a">Use Touchpad devices</div>
<div class="a" style="left:96px;top:563px;width:13px;height:13px;border:1px solid #c8c8c8;background:#fff"></div>
<svg style="left:97px;top:564px" width="11" height="11" viewBox="0 0 11 11"><path d="M1.5 5.5 L4.2 8.3 L9.5 2.2" stroke="#a0a0a0" fill="none" stroke-width="1.2"/></svg>
<div class="t" style="left:111px;top:565px;color:#8a8a8a">Collect input from all touchpad devices</div>
<div class="t" style="left:95px;top:590px;color:#9a9a9a">Current Touchpad Device:</div>
<div class="a" style="left:297px;top:586px;width:198px;height:20px;background:#cccccc;border:1px solid #c4c4c4"></div>
<svg style="left:481px;top:593px" width="9" height="6" viewBox="0 0 9 6"><path d="M0.5 0.5 L4.5 4.5 L8.5 0.5" stroke="#a0a0a0" fill="none" stroke-width="1"/></svg>
<div class="t" style="left:95px;top:616px;color:#9a9a9a">Does not support anything</div>
<!-- buttons -->
<div class="a" style="left:290px;top:663px;width:73px;height:22px;background:#e1e1e1;border:2px solid #0a78d4"></div>
<div class="t" style="left:290px;top:669px;width:73px;text-align:center;color:#111">OK</div>
<div class="a" style="left:371px;top:663px;width:73px;height:22px;background:#e1e1e1;border:1px solid #adadad"></div>
<div class="t" style="left:371px;top:669px;width:73px;text-align:center;color:#111">Cancel</div>
<div class="a" style="left:452px;top:663px;width:73px;height:22px;background:#e1e1e1;border:1px solid #adadad"></div>
<div class="t" style="left:452px;top:669px;width:73px;text-align:center;color:#111">Help</div>
</div>
<!-- right panel -->
<style>
.ph{position:absolute;left:1427px;width:248px;height:25px;background:linear-gradient(90deg,#7c7c7c,#878787)}
.pm{position:absolute;left:1435px;width:14px;height:14px;border:1px solid #f4f4f4}
.pm:after{content:"";position:absolute;left:2px;top:5px;width:8px;height:2px;background:#f4f4f4}
.pt{position:absolute;left:1457px;color:#f4f4f4;font-size:12px;line-height:12px;white-space:nowrap}
.pi{position:absolute;color:#ececec;font-size:11px;line-height:11px;white-space:nowrap}
.pbtn{position:absolute;background:linear-gradient(#535353,#3f3f3f);border:1px solid #2a2a2a}
.lb{position:absolute;top:681px;width:27px;height:34px;background:linear-gradient(#4c4c4c,#3a3a3a);border:1px solid #1e1e1e}
.pp{position:absolute;left:1435px;width:12px;height:12px;border:1px solid #eee}
.pp:before{content:"";position:absolute;left:2px;top:4px;width:6px;height:1px;background:#eee}
.pp:after{content:"";position:absolute;left:4.5px;top:1.5px;width:1px;height:6px;background:#eee}
.ck{position:absolute;left:1643px;width:20px;height:13px;background:#2b2b2b}
</style>
<div class="ph" style="top:105px"></div><div class="pm" style="top:110px"></div><div class="pt" style="top:112px">Information</div>
<div class="pi" style="left:1437px;top:143px">Mouse:</div>
<div class="pi" style="left:1494px;top:143px">( 657 , -164 )</div>
<div class="pi" style="left:1437px;top:159px">Object:</div>
<div class="pi" style="left:1494px;top:159px">( 0 , 0 ) 352 x 500 pixels</div>
<div class="pi" style="left:1437px;top:186px">Red</div><div class="pi" style="left:1494px;top:186px">: 48</div>
<div class="pi" style="left:1437px;top:202px">Green</div><div class="pi" style="left:1494px;top:202px">: 48</div>
<div class="pi" style="left:1437px;top:218px">Blue</div><div class="pi" style="left:1494px;top:218px">: 48</div>
<div class="pi" style="left:1437px;top:234px">Hex</div><div class="pi" style="left:1494px;top:234px">: #303030</div>
<div class="pi" style="left:1549px;top:186px">Hue</div><div class="pi" style="left:1606px;top:186px">: 0</div>
<div class="pi" style="left:1549px;top:202px">Saturation</div><div class="pi" style="left:1606px;top:202px">: 0</div>
<div class="pi" style="left:1549px;top:218px">Value</div><div class="pi" style="left:1606px;top:218px">: 48</div>

<div class="ph" style="top:255px"></div><div class="pm" style="top:260px"></div><div class="pt" style="top:262px">Color Picker</div>
<div class="pbtn" style="left:1438px;top:291px;width:90px;height:55px"></div>
<svg style="left:1446px;top:298px" width="56" height="21" viewBox="0 0 56 21">
<rect width="56" height="21" fill="#fff"/>
<g fill="#dedede"><rect x="0" y="0" width="10" height="10.5"/><rect x="20" y="0" width="10" height="10.5"/><rect x="40" y="0" width="10" height="10.5"/><rect x="10" y="10.5" width="10" height="10.5"/><rect x="30" y="10.5" width="10" height="10.5"/><rect x="50" y="10.5" width="6" height="10.5"/></g>
</svg>
<div class="pi" style="left:1458px;top:324px;color:#e8e8e8">Stroke</div>
<div class="a" style="left:1511px;top:294px;width:1px;height:49px;background:#9a9a9a"></div>
<svg style="left:1515px;top:318px" width="9" height="5" viewBox="0 0 9 5"><path d="M0 0 H9 L4.5 5 Z" fill="#d8d8d8"/></svg>
<div class="pbtn" style="left:1531px;top:291px;width:39px;height:55px"></div>
<svg style="left:1539px;top:308px" width="22" height="24" viewBox="0 0 22 24">
<path d="M0 5 L6 0 V3 H12 V7 H6 V10 Z" fill="#5fd21e" stroke="#2f8a0a" stroke-width="0.5"/>
<path d="M21 18 L15 13 V16 H9 V20 H15 V23 Z" fill="#5fd21e" stroke="#2f8a0a" stroke-width="0.5"/>
</svg>
<div class="pbtn" style="left:1573px;top:291px;width:90px;height:55px"></div>
<div class="a" style="left:1581px;top:298px;width:56px;height:22px;background:#6b7d46;border:1px solid #a0a890"></div>
<div class="pi" style="left:1601px;top:324px;color:#8e8e8e">Fill</div>
<div class="a" style="left:1646px;top:294px;width:1px;height:49px;background:#e0e0e0"></div>
<svg style="left:1650px;top:318px" width="9" height="5" viewBox="0 0 9 5"><path d="M0 0 H9 L4.5 5 Z" fill="#d8d8d8"/></svg>

<div class="ph" style="top:358px"></div><div class="pm" style="top:363px"></div><div class="pt" style="top:365px">Image Options</div>
<div class="a" style="left:1438px;top:396px;width:12px;height:12px;background:#2a2a2a;border:1px solid #1a1a1a"></div>
<svg style="left:1439px;top:396px" width="11" height="11" viewBox="0 0 11 11"><path d="M1.5 5.5 L4.3 8.5 L10 1.5" stroke="#fff" fill="none" stroke-width="2"/></svg>
<div class="pi" style="left:1457px;top:397px;color:#f0f0f0">Lock Aspect Ratio</div>
<div class="pbtn" style="left:1438px;top:417px;width:107px;height:23px"></div>
<div class="pi" style="left:1438px;top:424px;width:107px;text-align:center;color:#f0f0f0">Flip Horizontally</div>
<div class="pbtn" style="left:1551px;top:417px;width:107px;height:23px"></div>
<div class="pi" style="left:1551px;top:424px;width:107px;text-align:center;color:#f0f0f0">Flip Vertically</div>
<div class="a" style="left:1438px;top:449px;width:12px;height:12px;background:#333;border:1px solid #1f1f1f"></div>
<div class="pi" style="left:1457px;top:450px;color:#c8c8c8">Use Vectorization of Image</div>
<div class="pi" style="left:1437px;top:476px;color:#f0f0f0">Detail:</div>
<div class="a" style="left:1498px;top:478px;width:153px;height:3px;background:#2c2c2c;border-radius:2px;border-bottom:1px solid #666"></div>
<svg style="left:1569px;top:477px" width="11" height="12" viewBox="0 0 11 12"><path d="M0.5 4 L5.5 0.5 L10.5 4 V11.5 H0.5 Z" fill="#c4c4c4" stroke="#888" stroke-width="0.8"/></svg>

<div class="ph" style="top:649px"></div><div class="pm" style="top:654px"></div><div class="pt" style="top:656px">Layer List</div>
<div class="lb" style="left:1438px"></div>
<svg style="left:1439px;top:684px" width="26" height="28" viewBox="0 0 26 28">
<defs><linearGradient id="lg1" x1="0" y1="0" x2="1" y2="1"><stop offset="0" stop-color="#8ccaf8"/><stop offset="1" stop-color="#e8f6ff"/></linearGradient></defs>
<rect x="4.5" y="5.5" width="16" height="16" fill="url(#lg1)" stroke="#3c6cb0" stroke-width="1"/>
<path d="M4.5 12 H9 V16.5 H13.5 V21 H9 V25.5 H4.5 V21 H0 V16.5 H4.5 Z" fill="#66dd33" stroke="#2f8a10" stroke-width="0.8"/>
</svg>
<div class="lb" style="left:1471px"></div>
<svg style="left:1472px;top:684px" width="26" height="28" viewBox="0 0 26 28">
<rect x="4.5" y="5.5" width="16" height="16" fill="url(#lg1)" stroke="#3c6cb0" stroke-width="1"/>
<path d="M1.5 14 L12.5 24.5 M12.5 14 L1.5 24.5" stroke="#e03a10" stroke-width="3.4"/>
<path d="M1.5 14 L12.5 24.5 M12.5 14 L1.5 24.5" stroke="#f06a30" stroke-width="1.2"/>
</svg>
<div class="lb" style="left:1504px"></div>
<svg style="left:1505px;top:684px" width="26" height="28" viewBox="0 0 26 28">
<rect x="1.5" y="9.5" width="15" height="15" fill="url(#lg1)" stroke="#3c6cb0" stroke-width="1"/>
<rect x="7.5" y="2.5" width="15" height="16" fill="url(#lg1)" stroke="#3c6cb0" stroke-width="1"/>
</svg>
<div class="lb" style="left:1537px"></div>
<svg style="left:1538px;top:684px" width="26" height="28" viewBox="0 0 26 28" opacity="0.7">
<path d="M2 15 L12.5 21 L23 15 M2 18 L12.5 24 L23 18 M2 12 L12.5 18 L23 12" stroke="#8aa4c8" stroke-width="1.6" fill="none"/>
<path d="M10.5 2 H14.5 V9 H17 L12.5 14 L8 9 H10.5 Z" fill="#4a6ab0"/>
</svg>
<div class="pi" style="left:1569px;top:694px;color:#f0f0f0">Opacity:</div>
<div class="pi" style="left:1617px;top:694px;color:#f0f0f0">100%</div>
<div class="a" style="left:1646px;top:689px;width:15px;height:17px;background:#3a3a3a;border:1px solid #222"></div>
<svg style="left:1650px;top:696px" width="7" height="4" viewBox="0 0 7 4"><path d="M0 0 H7 L3.5 4 Z" fill="#e0e0e0"/></svg>
<div class="pp" style="top:730px"></div>
<div class="t" style="left:1456px;top:730px;font-size:12.5px;color:#8e8e8e">Layer 1</div>
<div class="ck" style="top:728px"></div>
<svg style="left:1645px;top:729px" width="16" height="11" viewBox="0 0 16 11"><path d="M1.5 5.5 L6 9 L14.5 2" stroke="#fff" fill="none" stroke-width="3"/></svg>
<div class="a" style="left:1427px;top:751px;width:248px;height:29px;background:#7b7b7b"></div>
<div class="pp" style="top:759px"></div>
<div class="t" style="left:1456px;top:759px;font-size:12.5px;color:#f8f8f8">Layer</div>
<div class="ck" style="top:757px"></div>
<svg style="left:1645px;top:758px" width="16" height="11" viewBox="0 0 16 11"><path d="M1.5 5.5 L6 9 L14.5 2" stroke="#fff" fill="none" stroke-width="3"/></svg>
<div class="t" style="left:1435px;top:788px;font-size:12.5px;color:#f0f0f0;font-style:italic">Background</div>
<div class="a" style="left:1546px;top:784px;width:123px;height:19px;background:#fff;border-right:1px solid #222;border-bottom:1px solid #222"></div>
<div class="a" style="left:1427px;top:808px;width:248px;height:1px;background:#5f5f5f"></div>
<!-- status bar -->
<div class="t" style="left:2px;top:995px;font-size:11.5px;color:#e6e6e6">DrawPad Graphic Design Editor Free</div>
<div class="t" style="left:1440px;top:994px;font-size:12px;color:#f0f0f0">100%</div>
<svg style="left:1477px;top:996px" width="7" height="4" viewBox="0 0 7 4"><path d="M0 4 H7 L3.5 0 Z" fill="#e8e8e8"/></svg>
<svg style="left:1492px;top:990px" width="18" height="18" viewBox="0 0 18 18">
<circle cx="9" cy="9" r="8" fill="#5a5a5a" stroke="#6e6e6e" stroke-width="1"/>
<rect x="4.5" y="7.8" width="9" height="2.6" fill="#e0e0e0"/>
</svg>
<div class="a" style="left:1520px;top:997px;width:129px;height:3px;background:#1c1c1c;border-bottom:1px solid #888;border-radius:2px"></div>
<svg style="left:1546px;top:992px" width="11" height="14" viewBox="0 0 11 14"><path d="M0.5 0.5 H10.5 V9.5 L5.5 13.5 L0.5 9.5 Z" fill="#e4e4e4" stroke="#9a9a9a" stroke-width="0.8"/></svg>
<svg style="left:1658px;top:990px" width="18" height="18" viewBox="0 0 18 18">
<circle cx="9" cy="9" r="8" fill="#5a5a5a" stroke="#6e6e6e" stroke-width="1"/>
<path d="M4.5 9 H13.5 M9 4.5 V13.5" stroke="#e8e8e8" stroke-width="2.6"/>
</svg>
</body></html>
